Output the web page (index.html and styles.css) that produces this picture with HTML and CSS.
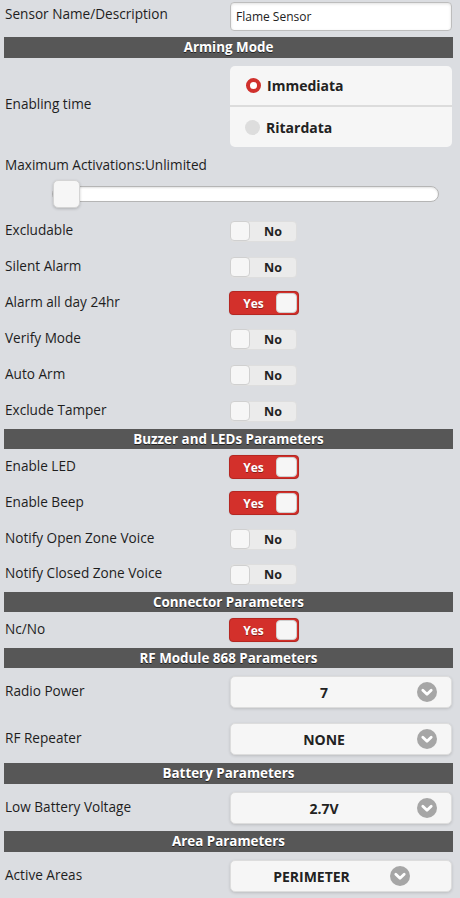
FILE: index.html
```html
<!DOCTYPE html>
<html>
<head>
<meta charset="utf-8">
<link rel="stylesheet" href="styles.css">
</head>
<body>
<div class="page">
  <div class="row row-input">
    <div class="label">Sensor Name/Description</div>
    <div class="ctrl"><div class="input">Flame Sensor</div></div>
  </div>

  <div class="hdr hdr-first">Arming Mode</div>
  <div class="row row-radio">
    <div class="label">Enabling time</div>
    <div class="ctrl">
      <div class="radios">
        <div class="radio-item"><span class="rdot on"></span><span>Immediata</span></div>
        <div class="radio-sep"></div>
        <div class="radio-item"><span class="rdot"></span><span>Ritardata</span></div>
      </div>
    </div>
  </div>
  <div class="label maxact">Maximum Activations:Unlimited</div>
  <div class="slider">
    <div class="track"></div>
    <div class="thumb"></div>
  </div>
  <div class="toggles">
    <div class="row trow"><div class="label">Excludable</div><div class="ctrl"><div class="tg off"><span class="knob"></span><span class="tt">No</span></div></div></div>
    <div class="row trow"><div class="label">Silent Alarm</div><div class="ctrl"><div class="tg off"><span class="knob"></span><span class="tt">No</span></div></div></div>
    <div class="row trow"><div class="label">Alarm all day 24hr</div><div class="ctrl"><div class="tg on"><span class="tt">Yes</span><span class="knob"></span></div></div></div>
    <div class="row trow"><div class="label">Verify Mode</div><div class="ctrl"><div class="tg off"><span class="knob"></span><span class="tt">No</span></div></div></div>
    <div class="row trow"><div class="label">Auto Arm</div><div class="ctrl"><div class="tg off"><span class="knob"></span><span class="tt">No</span></div></div></div>
    <div class="row trow"><div class="label">Exclude Tamper</div><div class="ctrl"><div class="tg off"><span class="knob"></span><span class="tt">No</span></div></div></div>
  </div>

  <div class="hdr">Buzzer and LEDs Parameters</div>
  <div class="toggles">
    <div class="row trow"><div class="label">Enable LED</div><div class="ctrl"><div class="tg on"><span class="tt">Yes</span><span class="knob"></span></div></div></div>
    <div class="row trow"><div class="label">Enable Beep</div><div class="ctrl"><div class="tg on"><span class="tt">Yes</span><span class="knob"></span></div></div></div>
    <div class="row trow"><div class="label">Notify Open Zone Voice</div><div class="ctrl"><div class="tg off"><span class="knob"></span><span class="tt">No</span></div></div></div>
    <div class="row trow trow-short"><div class="label">Notify Closed Zone Voice</div><div class="ctrl"><div class="tg off"><span class="knob"></span><span class="tt">No</span></div></div></div>
  </div>

  <div class="hdr">Connector Parameters</div>
  <div class="toggles">
    <div class="row trow"><div class="label">Nc/No</div><div class="ctrl"><div class="tg on"><span class="tt">Yes</span><span class="knob"></span></div></div></div>
  </div>

  <div class="hdr">RF Module 868 Parameters</div>
  <div class="row srow">
    <div class="label">Radio Power</div>
    <div class="ctrl"><div class="sel"><span class="sv">7</span><span class="sico"><svg viewBox="0 0 20 20" width="20" height="20"><circle cx="10" cy="10" r="10" fill="#a6a6a6"/><path d="M5.8 8.2 L10 12.3 L14.2 8.2" fill="none" stroke="#fff" stroke-width="2.8" stroke-linecap="round" stroke-linejoin="round"/></svg></span></div></div>
  </div>
  <div class="row srow">
    <div class="label">RF Repeater</div>
    <div class="ctrl"><div class="sel"><span class="sv">NONE</span><span class="sico"><svg viewBox="0 0 20 20" width="20" height="20"><circle cx="10" cy="10" r="10" fill="#a6a6a6"/><path d="M5.8 8.2 L10 12.3 L14.2 8.2" fill="none" stroke="#fff" stroke-width="2.8" stroke-linecap="round" stroke-linejoin="round"/></svg></span></div></div>
  </div>

  <div class="hdr hdr-batt">Battery Parameters</div>
  <div class="row srow">
    <div class="label">Low Battery Voltage</div>
    <div class="ctrl"><div class="sel"><span class="sv">2.7V</span><span class="sico"><svg viewBox="0 0 20 20" width="20" height="20"><circle cx="10" cy="10" r="10" fill="#a6a6a6"/><path d="M5.8 8.2 L10 12.3 L14.2 8.2" fill="none" stroke="#fff" stroke-width="2.8" stroke-linecap="round" stroke-linejoin="round"/></svg></span></div></div>
  </div>

  <div class="hdr hdr-area">Area Parameters</div>
  <div class="row srow">
    <div class="label">Active Areas</div>
    <div class="ctrl"><div class="sel sel-area"><span class="sv">PERIMETER</span><span class="sico"><svg viewBox="0 0 20 20" width="20" height="20"><circle cx="10" cy="10" r="10" fill="#a6a6a6"/><path d="M5.8 8.2 L10 12.3 L14.2 8.2" fill="none" stroke="#fff" stroke-width="2.8" stroke-linecap="round" stroke-linejoin="round"/></svg></span></div></div>
  </div>
</div>
</body>
</html>
```
FILE: styles.css
```css
html, body {
  margin: 0;
  padding: 0;
  background: #dbdde1;
}
body {
  font-family: "Open Sans", "Noto Sans", sans-serif;
  font-size: 13.6px;
  color: #222;
}
.page {
  width: 449px;
  margin-left: 4px;
  padding-top: 2px;
}
.row {
  display: flex;
  align-items: center;
}
.label {
  width: 225px;
  padding-left: 1px;
  box-sizing: border-box;
  font-size: 13.6px;
  line-height: 18px;
  color: #1e1e1e;
  flex-shrink: 0;
  white-space: nowrap;
}
.ctrl {
  width: 222px;
  flex-shrink: 0;
  margin-left: 1px;
}
.row-input {
  height: 29px;
  align-items: flex-start;
}
.row-input .label {
  padding-top: 3px;
}
.input {
  height: 29px;
  box-sizing: border-box;
  background: #fff;
  border: 1px solid #bdbdbd;
  border-radius: 4px;
  box-shadow: inset 0 1px 3px rgba(0,0,0,0.12);
  font-size: 12px;
  line-height: 27px;
  padding-left: 5px;
  color: #222;
}
.hdr {
  height: 20px;
  line-height: 20px;
  background: #575757;
  color: #fff;
  font-weight: 700;
  font-size: 13.4px;
  text-align: center;
  text-shadow: 0 1px 0 #222;
}
.hdr-first {
  margin-top: 6px;
  height: 21px;
  line-height: 21px;
}
.hdr-batt {
  margin-top: 1px;
  height: 21px;
  line-height: 21px;
}
.hdr-area {
  height: 21px;
  line-height: 21px;
}
.row-radio {
  margin-top: 8px;
}
.row-radio .label {
  margin-top: -5px;
}
.radios {
  background: #f6f6f6;
  border-radius: 5px;
  overflow: hidden;
}
.radio-item {
  height: 39px;
  display: flex;
  align-items: center;
  padding-left: 16px;
  font-weight: 700;
  font-size: 14px;
  color: #222;
}
.radio-item + .radio-sep + .radio-item {
  height: 40px;
  padding-left: 15px;
}
.radio-sep {
  height: 2px;
  background: #dcdcdc;
}
.rdot {
  width: 15px;
  height: 15px;
  box-sizing: border-box;
  border-radius: 50%;
  background: #dddddd;
  margin-right: 6px;
}
.rdot.on {
  background: #fff;
  border: 4px solid #d0312d;
}
.maxact {
  margin-top: 9px;
  padding-left: 1px;
}
.slider {
  position: relative;
  height: 28px;
  margin-top: 6px;
  margin-left: 48px;
  width: 387px;
}
.track {
  position: absolute;
  left: 0;
  right: 0;
  top: 6px;
  height: 16px;
  box-sizing: border-box;
  background: #fff;
  border: 1px solid #b5b5b5;
  border-radius: 8px;
  box-shadow: inset 0 1px 2px rgba(0,0,0,0.12);
}
.thumb {
  position: absolute;
  left: 1px;
  top: 0;
  width: 27px;
  height: 28px;
  box-sizing: border-box;
  background: #f6f6f6;
  border: 1px solid #d4d4d4;
  border-radius: 5px;
  box-shadow: 0 1px 3px rgba(0,0,0,0.2);
}
.slider + .toggles {
  margin-top: 5px;
}
.trow {
  height: 36px;
}
.trow-short {
  height: 35px;
}
.trow .label {
  margin-top: -3px;
}
.tg {
  width: 67px;
  height: 21px;
  box-sizing: border-box;
  border-radius: 4px;
  display: flex;
  align-items: center;
  font-weight: 700;
  font-size: 12.5px;
}
.tg.off {
  background: #ebebeb;
  border: 1px solid #dedede;
}
.tg.off .knob {
  width: 20px;
  height: 20px;
  margin-left: -1px;
  box-sizing: border-box;
  background: #f6f6f6;
  border: 1px solid #d0d0d0;
  border-radius: 4px;
}
.tg.off .tt {
  flex: 1;
  text-align: center;
  color: #222;
}
.tg.on {
  width: 70px;
  height: 24px;
  margin-left: -1px;
  background: #d3302b;
  border: 1px solid #b52722;
  box-shadow: 0 0 1px rgba(0,0,0,0.2);
}
.tg.on .tt {
  flex: 1;
  text-align: center;
  color: #fff;
  padding-left: 1px;
  font-size: 12px;
  text-shadow: 0 1px 0 #8a1c18;
}
.tg.on .knob {
  width: 21px;
  height: 20px;
  margin-right: 1px;
  box-sizing: border-box;
  background: #f6f6f6;
  border: 1px solid #cfcfcf;
  border-radius: 4px;
}
.srow {
  padding: 8px 0 7px;
}
.srow .label {
  margin-top: -3px;
}
.sel {
  height: 32px;
  box-sizing: border-box;
  background: #f6f6f6;
  border: 1px solid #dddddd;
  border-radius: 5px;
  box-shadow: 0 1px 3px rgba(0,0,0,0.15);
  display: flex;
  align-items: center;
  font-weight: 700;
  font-size: 14px;
  color: #222;
}
.sv {
  flex: 1;
  text-align: center;
  padding-left: 6px;
}
.sico {
  display: flex;
  width: 20px;
  height: 20px;
  margin-right: 14px;
  margin-left: 6px;
}
.sel-area .sv {
  padding-left: 2px;
}
.sel-area .sico {
  margin-right: 41px;
  margin-left: 0;
}
```
